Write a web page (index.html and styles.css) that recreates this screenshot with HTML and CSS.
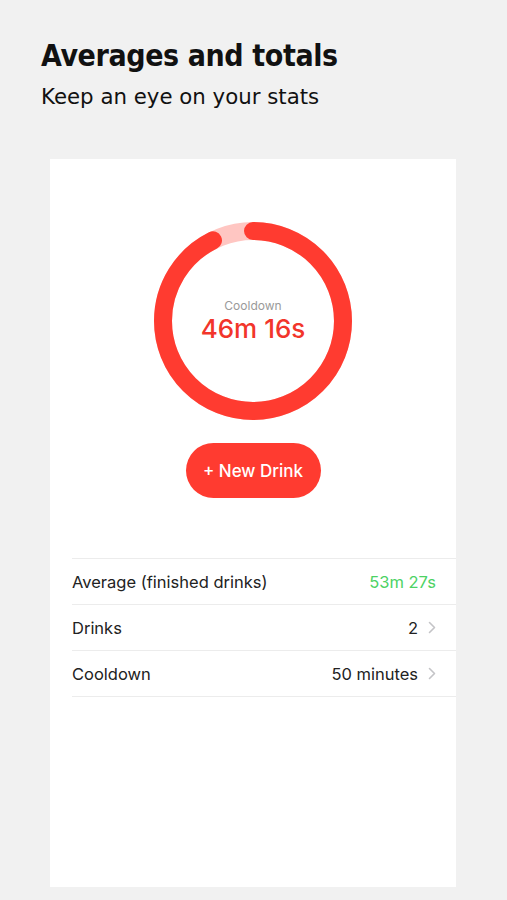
FILE: index.html
```html
<!DOCTYPE html>
<html lang="en">
<head>
    <meta charset="UTF-8">
    <meta name="viewport" content="width=device-width, initial-scale=1.0">
    <title>Averages and totals</title>
    <link rel="stylesheet" href="styles.css">
</head>
<body>
    <header class="intro">
        <h1>Averages and totals</h1>
        <p>Keep an eye on your stats</p>
    </header>

    <div class="card">
        <!-- Anillo de cooldown: 46m16s de 50m restantes -->
        <div class="ring">
            <svg width="198" height="198" viewBox="0 0 198 198">
                <circle class="track" cx="99" cy="99" r="90"></circle>
                <circle class="progress" cx="99" cy="99" r="90"
                        stroke-dasharray="523.1 565.5" transform="rotate(-90 99 99)"></circle>
            </svg>
            <div class="ring-label">
                <span class="ring-title">Cooldown</span>
                <span class="ring-time">46m 16s</span>
            </div>
        </div>

        <button class="new-drink">+ New Drink</button>

        <ul class="stats">
            <li>
                <span>Average (finished drinks)</span>
                <span class="value green">53m 27s</span>
            </li>
            <li>
                <span>Drinks</span>
                <span class="value">2
                    <svg class="chevron" width="8" height="13" viewBox="0 0 8 13"><path d="M1.5 1.5 L6.5 6.5 L1.5 11.5"/></svg>
                </span>
            </li>
            <li>
                <span>Cooldown</span>
                <span class="value">50 minutes
                    <svg class="chevron" width="8" height="13" viewBox="0 0 8 13"><path d="M1.5 1.5 L6.5 6.5 L1.5 11.5"/></svg>
                </span>
            </li>
        </ul>
    </div>
</body>
</html>
```

FILE: styles.css
```css
body {
    margin: 0;
    background: #f1f1f1;
    font-family: Inter, "Noto Sans", sans-serif;
    color: #1c1c1e;
}
.intro {
    padding: 38px 0 0 41px;
    font-family: "DejaVu Sans", Verdana, sans-serif;
    color: #111;
}
.intro h1 {
    margin: 0;
    font-family: "DejaVu Sans Condensed", "DejaVu Sans", sans-serif;
    font-stretch: condensed;
    font-size: 30px;
    font-weight: bold;
    line-height: 36px;
    letter-spacing: -0.4px;
}
.intro p {
    margin: 10px 0 0;
    font-size: 21.3px;
    line-height: 26px;
}
.card {
    background: #fff;
    margin: 49px 0 0 50px;
    width: 406px;
    height: 728px;
    display: flex;
    flex-direction: column;
    align-items: center;
}
.ring {
    position: relative;
    width: 198px;
    height: 198px;
    margin-top: 63px;
}
.ring svg {
    display: block;
}
.ring circle {
    fill: none;
    stroke-width: 18;
}
.ring .track {
    stroke: #ffc6c2;
}
.ring .progress {
    stroke: #ff3b30;
    stroke-linecap: round;
}
.ring-label {
    position: absolute;
    inset: 0;
    display: flex;
    flex-direction: column;
    align-items: center;
    justify-content: center;
}
.ring-title {
    font-size: 12px;
    color: #9a9a9a;
}
.ring-time {
    font-size: 26px;
    font-weight: 500;
    color: #f2352b;
}
.new-drink {
    margin-top: 23px;
    width: 135px;
    height: 55px;
    border: none;
    border-radius: 28px;
    background: #ff3b30;
    color: #fff;
    font-family: Inter, sans-serif;
    font-size: 17px;
    font-weight: 500;
}
.stats {
    list-style: none;
    margin: 60px 0 0 22px;
    padding: 0;
    align-self: stretch;
    border-top: 1px solid #ececec;
}
.stats li {
    height: 45px;
    padding-right: 20px;
    display: flex;
    align-items: center;
    justify-content: space-between;
    border-bottom: 1px solid #ececec;
    font-size: 16.5px;
    color: #222;
}
.value {
    display: flex;
    align-items: center;
    gap: 10px;
    color: #222;
}
.green {
    color: #4cd264;
}
.chevron path {
    fill: none;
    stroke: #c4c4c7;
    stroke-width: 1.6;
    stroke-linecap: round;
    stroke-linejoin: round;
}
```
